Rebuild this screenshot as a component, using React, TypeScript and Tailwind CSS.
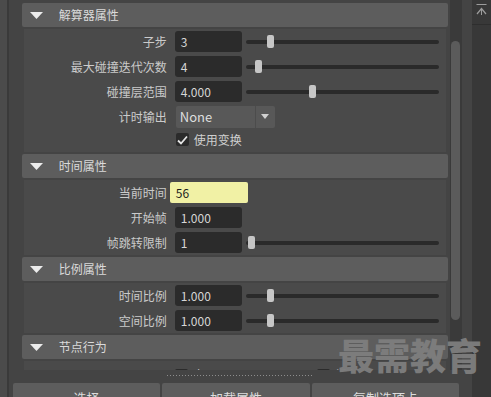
import type { ReactNode } from "react"

const font = "font-['Noto_Sans_CJK_SC','Noto_Sans',sans-serif]"

export default function App() {
  return (
    <div className={`relative flex h-[397px] w-[491px] overflow-hidden bg-[#444444] text-[12px] ${font}`}>
      <div className="w-[7px] bg-[#4b4b4b]" />
      <div className="w-[2px] bg-[#3a3a3a]" />
      <div className="flex w-[463px] flex-col">
        <div className="flex h-[370px]">
          <Panels />
          <div className="ml-[2px] h-full w-[12px] bg-[#3a3a3a] pt-[41px]">
            <div className="mx-auto h-[279px] w-[9px] rounded-full bg-[#5b5b5b]" />
          </div>
        </div>
        <BottomBar />
      </div>
      <SideColumn />
      <Watermark />
    </div>
  )
}

function Panels() {
  return (
    <div className="flex h-full w-[426px] ml-[13px] flex-col gap-[2px] overflow-hidden pt-[3px]">
      <SectionHeader title="解算器属性" />
      <div className="mx-[2px] bg-[#4a4a4a] pb-[2px]">
        <Row label="子步">
          <NumField value="3" />
          <Slider pos={21} />
        </Row>
        <Row label="最大碰撞迭代次数">
          <NumField value="4" />
          <Slider pos={9} />
        </Row>
        <Row label="碰撞层范围">
          <NumField value="4.000" />
          <Slider pos={63} />
        </Row>
        <Row label="计时输出">
          <Dropdown value="None" />
        </Row>
        <div className="flex h-[21px] items-center pl-[152px]">
          <Checkbox checked />
          <span className="ml-[5px] text-[#cfcfcf]">使用变换</span>
        </div>
      </div>

      <SectionHeader title="时间属性" />
      <div className="mx-[2px] bg-[#4a4a4a]">
        <Row label="当前时间">
          <div className="ml-[3px] flex h-[21px] w-[78px] items-center rounded-[2px] bg-[#f1f1a5] pl-[6px] text-[#1e1e1e]">
            56
          </div>
        </Row>
        <Row label="开始帧">
          <NumField value="1.000" />
        </Row>
        <Row label="帧跳转限制">
          <NumField value="1" />
          <Slider pos={2} />
        </Row>
      </div>

      <SectionHeader title="比例属性" />
      <div className="mx-[2px] bg-[#4a4a4a]">
        <Row label="时间比例">
          <NumField value="1.000" />
          <Slider pos={21} />
        </Row>
        <Row label="空间比例">
          <NumField value="1.000" />
          <Slider pos={21} />
        </Row>
      </div>

      <SectionHeader title="节点行为" />
      <div className="mx-[2px] h-[30px] bg-[#4a4a4a] pt-[5px]">
        <div className="flex items-center pl-[151px]">
          <Checkbox />
          <span className="ml-[5px] text-[#cfcfcf]">启用</span>
          <div className="ml-[100px]">
            <Checkbox />
          </div>
          <span className="ml-[5px] text-[#cfcfcf]">缓存</span>
        </div>
      </div>
    </div>
  )
}

function SectionHeader({ title }: { title: string }) {
  return (
    <div className="flex h-[24px] shrink-0 items-center rounded-[2px] bg-[#5d5d5d] pl-[8px]">
      <svg width="13" height="7" viewBox="0 0 13 7">
        <polygon points="0,0 13,0 6.5,7" fill="#ececec" />
      </svg>
      <span className="ml-[16px] text-[12px] text-[#dadada]">{title}</span>
    </div>
  )
}

function Row({ label, children }: { label: string; children: ReactNode }) {
  return (
    <div className="flex h-[25px] items-center">
      <div className="w-[143px] shrink-0 text-right text-[#cbcbcb]">{label}</div>
      {children}
    </div>
  )
}

function NumField({ value }: { value: string }) {
  return (
    <div className="ml-[8px] flex h-[21px] w-[67px] shrink-0 items-center rounded-[3px] bg-[#2b2b2b] pl-[6px] text-[#d6d6d6]">
      {value}
    </div>
  )
}

function Slider({ pos }: { pos: number }) {
  return (
    <div className="relative ml-[4px] flex h-[13px] w-[193px] items-center">
      <div className="h-[4px] w-full rounded-full bg-[#2a2a2a]" />
      <div
        className="absolute top-0 h-[13px] w-[7px] rounded-[2px] bg-[#c6c6c6]"
        style={{ left: pos }}
      />
    </div>
  )
}

function Dropdown({ value }: { value: string }) {
  return (
    <div className="ml-[9px] flex h-[22px] w-[99px] items-stretch overflow-hidden rounded-[2px] bg-[#585858]">
      <div className="flex flex-1 items-center pl-[4px] text-[13px] text-[#dedede]">{value}</div>
      <div className="w-px bg-[#4c4c4c]" />
      <div className="flex w-[19px] items-center justify-center">
        <svg width="8" height="5" viewBox="0 0 8 5">
          <polygon points="0,0 8,0 4,5" fill="#d0d0d0" />
        </svg>
      </div>
    </div>
  )
}

function Checkbox({ checked }: { checked?: boolean }) {
  return (
    <div className="flex h-[13px] w-[13px] items-center justify-center rounded-[2px] bg-[#2b2b2b]">
      {checked && (
        <svg width="11" height="10" viewBox="0 0 11 10">
          <path d="M1 5.5 L4 8.5 L10 1.5" fill="none" stroke="#e6e6e6" strokeWidth="1.8" />
        </svg>
      )}
    </div>
  )
}

function BottomBar() {
  return (
    <div className="flex flex-1 flex-col">
      <div className="ml-[158px] mt-[5px] h-px w-[146px] bg-[repeating-linear-gradient(to_right,#8c8c8c_0_1px,transparent_1px_3px)]" />
      <div className="mt-[7px] flex gap-[2px] pl-[4px] pr-[3px]">
        <Button label="选择" />
        <Button label="加载属性" />
        <Button label="复制选项卡" />
      </div>
    </div>
  )
}

function Button({ label }: { label: string }) {
  return (
    <div className="flex h-[30px] flex-1 items-center justify-center rounded-[2px] bg-[#5d5d5d] text-[13px] text-[#dcdcdc]">
      {label}
    </div>
  )
}

function SideColumn() {
  return (
    <div className="ml-[10px] flex w-[19px] flex-col bg-[#383838]">
      <div className="flex h-[25px] items-start justify-center border-b border-[#2e2e2e] pt-[3px]">
        <svg width="11" height="13" viewBox="0 0 11 13">
          <path d="M0.5 1.5 H10.5" stroke="#9c9c9c" strokeWidth="1" />
          <path d="M1 11 L5.5 5.5 L10 11" fill="none" stroke="#9c9c9c" strokeWidth="1.2" />
          <path d="M5.5 5.5 V12" stroke="#9c9c9c" strokeWidth="1" />
        </svg>
      </div>
    </div>
  )
}

function Watermark() {
  return (
    <div className="pointer-events-none absolute left-[338px] top-[336px] text-[36px] font-black leading-none text-[#7e7e7e] opacity-95">
      最需教育
    </div>
  )
}
